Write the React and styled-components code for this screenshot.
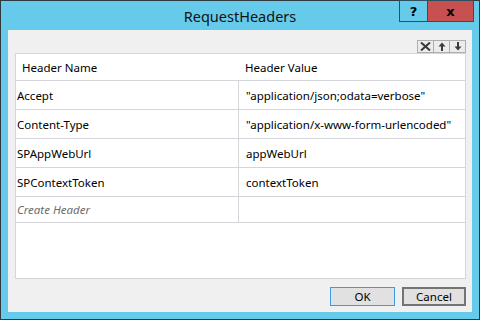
import React from "react"
import styled, { createGlobalStyle } from "styled-components"

const GlobalStyle = createGlobalStyle`
  html, body {
    margin: 0;
    padding: 0;
    width: 480px;
    height: 320px;
    overflow: hidden;
  }
  body {
    font-family: "Noto Sans", "Open Sans", sans-serif;
    font-size: 11.5px;
    color: #000;
  }
`

const Window = styled.div`
  box-sizing: border-box;
  width: 480px;
  height: 320px;
  background: #66cbea;
  border: 1px solid #2e3a40;
  display: flex;
  flex-direction: column;
`

const TitleBar = styled.div`
  height: 29px;
  flex-shrink: 0;
  display: grid;
  grid-template-columns: 1fr auto 1fr;
  align-items: start;
`

const Title = styled.div`
  grid-column: 2;
  font-size: 14.5px;
  line-height: 18px;
  padding-top: 6px;
  color: #111;
`

const Caption = styled.div`
  grid-column: 3;
  justify-self: end;
  display: flex;
  margin-right: 5px;
  margin-top: -1px;
`

const CaptionButton = styled.div`
  box-sizing: border-box;
  width: ${p => p.$w}px;
  height: 22px;
  border: 1px solid #2f4f5e;
  margin-left: ${p => (p.$join ? "-1px" : "0")};
  background: ${p => p.$bg};
  display: flex;
  align-items: center;
  justify-content: center;
  font-family: "DejaVu Sans", sans-serif;
  font-weight: bold;
  font-size: 13px;
  color: #000;
`

const Panel = styled.div`
  flex: 1;
  margin: 0 7px 7px 7px;
  background: #f0f0f0;
  display: flex;
  flex-direction: column;
  padding: 10px 6px 6px 7px;
`

const Toolbar = styled.div`
  display: flex;
  justify-content: flex-end;
  flex-shrink: 0;
`

const ToolButton = styled.div`
  box-sizing: border-box;
  width: ${p => p.$w}px;
  height: 13px;
  border: 1px solid #aeaeae;
  margin-left: ${p => (p.$join ? "-1px" : "0")};
  background: #ececec;
  display: flex;
  align-items: center;
  justify-content: center;
`

const Grid = styled.div`
  box-sizing: border-box;
  height: 226px;
  flex-shrink: 0;
  background: #fff;
  border: 1px solid #d5d5dc;
  display: flex;
  flex-direction: column;
`

const Row = styled.div`
  box-sizing: border-box;
  display: grid;
  grid-template-columns: 223px 1fr;
  height: ${p => p.$h}px;
  border-bottom: 1px solid #d5d5dc;
  flex-shrink: 0;
`

const Cell = styled.div`
  display: flex;
  align-items: center;
  padding-left: ${p => p.$pad}px;
  border-right: ${p => (p.$divider ? "1px solid #d5d5dc" : "none")};
  white-space: nowrap;
  overflow: hidden;
  font-style: ${p => (p.$hint ? "italic" : "normal")};
  color: ${p => (p.$hint ? "#6d6d6d" : "#000")};
`

const Footer = styled.div`
  display: flex;
  justify-content: flex-end;
  gap: 7px;
  margin-top: 8px;
`

const Button = styled.button`
  box-sizing: border-box;
  width: ${p => p.$w}px;
  height: 19px;
  padding: 0;
  font-family: inherit;
  font-size: 11.5px;
  color: #000;
  background: #e1e1e1;
  border: ${p => (p.$primary ? "1px solid #3c9ae8" : "2px solid #747474")};
  border-radius: 0;
`

const rows = [
  ["Accept", '"application/json;odata=verbose"'],
  ["Content-Type", '"application/x-www-form-urlencoded"'],
  ["SPAppWebUrl", "appWebUrl"],
  ["SPContextToken", "contextToken"],
]

const DeleteIcon = () => (
  <svg width="11" height="9" viewBox="0 0 11 9">
    <path d="M1 0.5 L10 8.5 M10 0.5 L1 8.5" stroke="#3a3a3a" strokeWidth="2" />
  </svg>
)

const ArrowIcon = ({ down }) => (
  <svg width="8" height="9" viewBox="0 0 8 9" style={down ? { transform: "rotate(180deg)" } : undefined}>
    <path d="M4 0.5 L7.5 4.5 L5 4.5 L5 9 L3 9 L3 4.5 L0.5 4.5 Z" fill="#3a3a3a" />
  </svg>
)

export default function App() {
  return (
    <>
      <GlobalStyle />
      <Window>
        <TitleBar>
          <Title>RequestHeaders</Title>
          <Caption>
            <CaptionButton $w={29} $bg="#66cbea">?</CaptionButton>
            <CaptionButton $w={47} $bg="#c75050" $join>x</CaptionButton>
          </Caption>
        </TitleBar>
        <Panel>
          <Toolbar>
            <ToolButton $w={17}><DeleteIcon /></ToolButton>
            <ToolButton $w={17} $join><ArrowIcon /></ToolButton>
            <ToolButton $w={17} $join><ArrowIcon down /></ToolButton>
          </Toolbar>
          <Grid>
            <Row $h={27}>
              <Cell $pad={6}>Header Name</Cell>
              <Cell $pad={6}>Header Value</Cell>
            </Row>
            {rows.map(([name, value]) => (
              <Row $h={29} key={name}>
                <Cell $pad={1} $divider>{name}</Cell>
                <Cell $pad={7}>{value}</Cell>
              </Row>
            ))}
            <Row $h={26}>
              <Cell $pad={1} $divider $hint>Create Header</Cell>
              <Cell $pad={7} />
            </Row>
          </Grid>
          <Footer>
            <Button $w={65} $primary>OK</Button>
            <Button $w={64}>Cancel</Button>
          </Footer>
        </Panel>
      </Window>
    </>
  )
}
